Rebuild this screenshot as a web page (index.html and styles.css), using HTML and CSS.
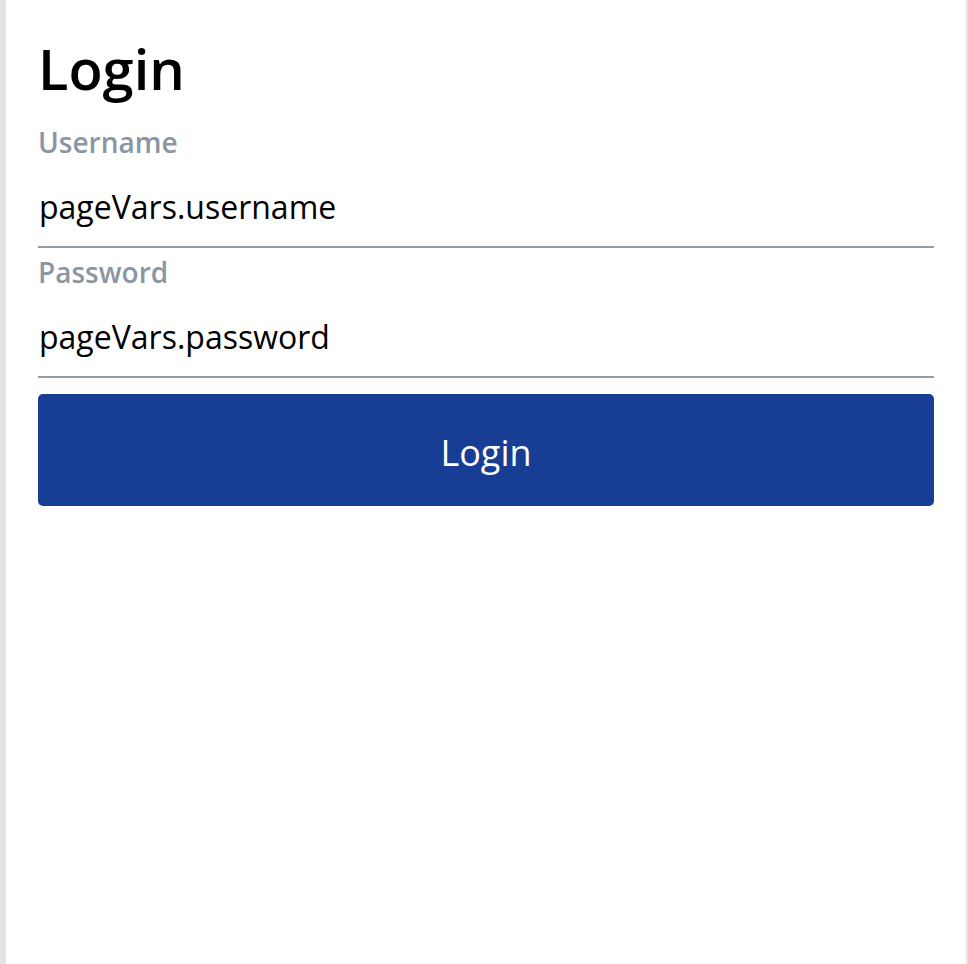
FILE: index.html
```html
<!DOCTYPE html>
<html>
<head>
<meta charset="utf-8">
<link rel="stylesheet" href="styles.css">
</head>
<body>
<div class="frame">
  <main class="page">
    <h1 class="title">Login</h1>
    <div class="field">
      <label class="label">Username</label>
      <div class="input">pageVars.username</div>
    </div>
    <div class="field">
      <label class="label">Password</label>
      <div class="input">pageVars.password</div>
    </div>
    <button class="btn">Login</button>
  </main>
</div>
</body>
</html>
```

FILE: styles.css
```css
html, body {
  margin: 0;
  padding: 0;
  background: #e3e3e8;
}
body {
  font-family: "Open Sans", "Noto Sans", sans-serif;
}
.frame {
  display: flex;
  padding: 0 2px 0 6px;
  min-height: 964px;
  box-sizing: border-box;
}
.page {
  flex: 1;
  background: #ffffff;
  padding: 37px 32px 0 32px;
  display: flex;
  flex-direction: column;
}
.title {
  margin: 0;
  font-size: 56px;
  line-height: 62px;
  font-weight: 600;
  color: #000000;
}
.field {
  display: flex;
  flex-direction: column;
  margin-top: 24px;
}
.field + .field {
  margin-top: 5px;
}
.label {
  font-size: 28px;
  line-height: 36px;
  padding-top: 1px;
  font-weight: 600;
  color: #8a96a3;
}
.input {
  font-size: 32px;
  line-height: 44px;
  padding: 25px 0 17px 1px;
  color: #000000;
  border-bottom: 2px solid #939ba4;
}
.btn {
  margin-top: 16px;
  height: 112px;
  padding: 4px 0 0 0;
  border: none;
  border-radius: 5px;
  background: #173d94;
  color: #ffffff;
  font-family: "Open Sans", "Noto Sans", sans-serif;
  font-size: 36px;
  font-weight: 400;
}
```
